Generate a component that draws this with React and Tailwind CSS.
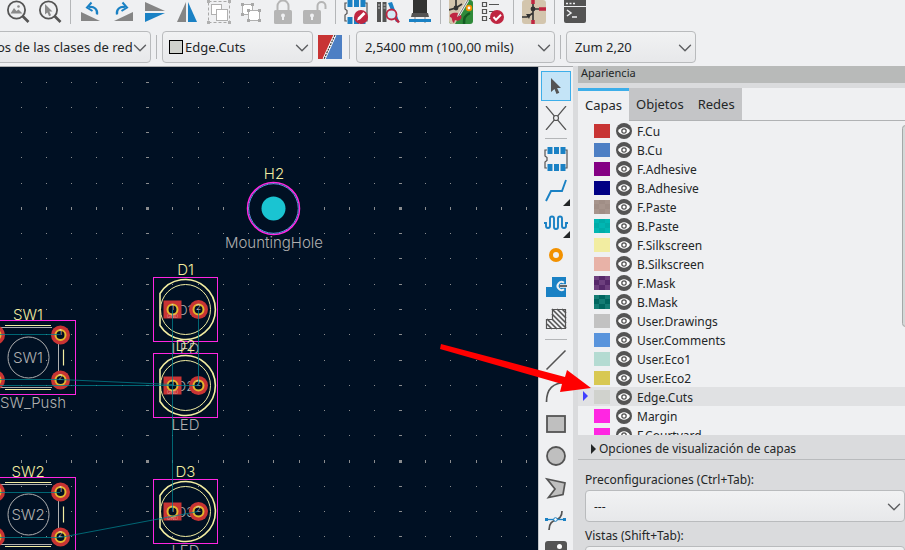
import React, { useState } from "react";
import { ChevronDown } from "lucide-react";

const layers = [
  { name: "F.Cu", color: "#c83434" },
  { name: "B.Cu", color: "#4d7fc4" },
  { name: "F.Adhesive", color: "#840084" },
  { name: "B.Adhesive", color: "#000084" },
  { name: "F.Paste", color: "#a6948c", check: "#a08e86" },
  { name: "B.Paste", color: "#00b6b2", check: "#00aca8" },
  { name: "F.Silkscreen", color: "#f2eda1" },
  { name: "B.Silkscreen", color: "#e8b2a7" },
  { name: "F.Mask", color: "#6d3f7e", check: "#56286a" },
  { name: "B.Mask", color: "#147c74", check: "#00665f" },
  { name: "User.Drawings", color: "#c2c2c2" },
  { name: "User.Comments", color: "#5994dc" },
  { name: "User.Eco1", color: "#b4dbd2" },
  { name: "User.Eco2", color: "#d8c852" },
  { name: "Edge.Cuts", color: "#d0d2cd" },
  { name: "Margin", color: "#ff26e2" },
  { name: "F.Courtyard", color: "#ff26e2" },
];

const GRAY = "#545454";
const BLUE = "#1a81c4";
const RED = "#bf2641";

function Icon({ children }) {
  return (
    <svg width="24" height="24" viewBox="0 0 24 24" fill="none" aria-hidden="true">
      {children}
    </svg>
  );
}

/* ---------- Top toolbar icons ---------- */

const Magnifier = () => (
  <>
    <circle cx="10.500" cy="10" r="8.600" stroke={GRAY} strokeWidth="1.800" />
    <path d="M16.500 16L22.500 22" stroke={GRAY} strokeWidth="2.600" />
  </>
);

const Padlock = ({ open }) => (
  <>
    <path
      d={open ? "M14.500 11V6a4 4 0 0 1 8 0v3" : "M6.500 11V6a5.500 5.500 0 0 1 11 0v5"}
      stroke="#b5b5b5"
      strokeWidth="2"
    />
    <g transform={open ? "translate(-3 0)" : undefined}>
      <rect x="3" y="10" width="18" height="14" rx="1.500" fill="#b5b5b5" />
      <circle cx="12" cy="15.500" r="2" fill="#eff0f2" />
      <path d="M11 16h2v4h-2z" fill="#eff0f2" />
    </g>
  </>
);

const Footprint = () => (
  <>
    <path d="M3 3H1v6l2 1.500v3L1 15v6h2M21 3h2v18h-2" stroke={GRAY} strokeWidth="1.200" />
    <path
      d="M3.500 0h5v7h-5zM10 0h5v7h-5zM16.500 0h5v7h-5zM3.500 17h5v7h-5zM10 17h5v7h-5zM16.500 17h5v7h-5z"
      fill={BLUE}
    />
  </>
);

const topIcons = [
  {
    label: "Zum a los objetos",
    art: (
      <>
        <Magnifier />
        <path d="M4.500 13.500L8 8l2.500 3L12.500 9.500l4 4z" fill="#8a8a8a" />
        <circle cx="12.500" cy="6.500" r="1.300" fill="#8a8a8a" />
      </>
    ),
  },
  {
    label: "Zum a la selección",
    art: (
      <>
        <Magnifier />
        <path d="M7 4l7.500 7.500h-3.200l1.800 3.800-2 .9-1.700-3.700L7 14.500z" fill="#8a8a8a" />
      </>
    ),
  },
  null,
  {
    label: "Rotar antihorario",
    art: (
      <>
        <path d="M2 12v9h19z" fill="#858585" />
        <path d="M18 14.500c1-5-3-8.500-8-7.500" stroke={BLUE} strokeWidth="2.200" />
        <path d="M12.500 2.500L8 7.500l5.500 3.500" stroke={BLUE} strokeWidth="2" />
      </>
    ),
  },
  {
    label: "Rotar horario",
    art: (
      <>
        <path d="M22 12v9H3z" fill="#858585" />
        <path d="M6 14.500c-1-5 3-8.500 8-7.500" stroke={BLUE} strokeWidth="2.200" />
        <path d="M11.500 2.500L16 7.500l-5.500 3.500" stroke={BLUE} strokeWidth="2" />
      </>
    ),
  },
  {
    label: "Reflejar verticalmente",
    art: (
      <>
        <path d="M2 2v9h20z" fill="#858585" />
        <path d="M2 22v-9h20z" fill={BLUE} />
      </>
    ),
  },
  {
    label: "Reflejar horizontalmente",
    art: (
      <>
        <path d="M2 22h9V2z" fill="#858585" />
        <path d="M22 22h-9V2z" fill={BLUE} />
      </>
    ),
  },
  {
    label: "Agrupar",
    art: (
      <>
        <rect x="1.500" y="1.500" width="21" height="21" stroke="#a8a8a8" strokeDasharray="3 2" />
        <path d="M0 0h3v3H0zM21 0h3v3h-3zM0 21h3v3H0zM21 21h3v3h-3z" fill="#b0b0b0" />
        <rect x="4.500" y="4.500" width="10" height="10" fill="#fff" stroke="#b0b0b0" />
        <rect x="9.500" y="9.500" width="11" height="11" fill="#fff" stroke="#b0b0b0" />
      </>
    ),
  },
  {
    label: "Desagrupar",
    art: (
      <>
        <rect x="3.500" y="4.500" width="10" height="10" fill="#fff" stroke="#b0b0b0" />
        <rect x="9.500" y="10.500" width="11" height="10" fill="#fff" stroke="#b0b0b0" />
        <path
          d="M2 3h3v3H2zM12 3h3v3h-3zM2 13h3v3H2zM8 9h3v3H8zM19 9h3v3h-3zM8 19h3v3H8zM19 19h3v3h-3z"
          fill="#a8a8a8"
        />
      </>
    ),
  },
  { label: "Bloquear", art: <Padlock /> },
  { label: "Desbloquear", art: <Padlock open /> },
  null,
  {
    label: "Editor de huellas",
    art: (
      <>
        <Footprint />
        <circle cx="17" cy="17" r="7" fill={RED} />
        <path d="M13 20.500l1-3 5.500-5.500 2 2-5.500 5.500z" fill="#fff" />
      </>
    ),
  },
  {
    label: "Biblioteca de huellas",
    art: (
      <>
        <path d="M1 2h4v20H1zM6.500 2h4v20h-4z" fill={GRAY} />
        <path d="M2 5h2M2 8h2M7.500 5h2M7.500 8h2" stroke="#ccc" />
        <path d="M12 3l4-1 7 19-3 1z" fill={BLUE} />
        <circle cx="15.500" cy="14.500" r="5" fill="#d3eaf5" stroke={RED} strokeWidth="1.800" />
        <path d="M19 18l4 4.500" stroke={RED} strokeWidth="2.600" />
      </>
    ),
  },
  {
    label: "Visor 3D",
    art: (
      <>
        <path d="M5 0h14v13H5z" fill="#333" />
        <path d="M4 13h16l1 4H3z" fill="#545454" />
        <path d="M7 17v6M17 17v6" stroke="#888" />
        <path d="M1 20.500h22" stroke={BLUE} strokeWidth="3" />
      </>
    ),
  },
  null,
  {
    label: "Actualizar placa",
    art: (
      <>
        <rect width="24" height="24" rx="3" fill="#2f8a3a" />
        <path d="M0 0h19L6 24H3a3 3 0 0 1-3-3z" fill="#d3c5ad" />
        <path d="M7 0v9M0 10l7-2 6-4" stroke="#333" strokeWidth="1.700" />
        <circle cx="7" cy="8" r="2.400" fill="#333" />
        <path d="M21 13c-6 3-6 5-6 11" stroke="#145c23" strokeWidth="2.500" />
        <circle cx="20" cy="8" r="2.300" fill="#fff" stroke="#f29100" strokeWidth="1.800" />
        <path d="M19 0L9 17" stroke="#eee" strokeWidth="2.500" />
        <path d="M19 0L9 17" stroke="#555" strokeWidth=".8" />
        <path d="M9 13c-5-1-9 1-8 4 3 0 1 4 4 6l1-3c4 2 8-1 6-5l-4 2z" fill={RED} />
      </>
    ),
  },
  {
    label: "Comprobador de reglas",
    art: (
      <>
        <path
          d="M1.500 2.500h4v4h-4zM1.500 9.500h4v4h-4zM1.500 16.500h4v4h-4z"
          stroke={GRAY}
          strokeWidth="1.200"
        />
        <path d="M8 4.500h10M8 11.500h5M8 18.500h3" stroke={GRAY} strokeWidth="1.200" />
        <circle cx="16" cy="17" r="7" fill={RED} />
        <path d="M12.500 17l2.500 2.800 5-5" stroke="#fff" strokeWidth="2" />
      </>
    ),
  },
  null,
  {
    label: "Editor de esquemas",
    art: (
      <>
        <rect width="24" height="24" rx="3" fill="#d3c5ad" />
        <path d="M11 0v23M11 9h13M0 17h5l6-4" stroke="#333" strokeWidth="1.600" />
        <path d="M11 0v4M17 9h7M11 20v4" stroke={RED} strokeWidth="3.500" />
        <circle cx="11" cy="9" r="2.400" fill="#333" />
        <path d="M4 14l5 0-2 5z" fill="#333" />
      </>
    ),
  },
  null,
  {
    label: "Consola",
    art: (
      <>
        <path d="M1 0h22v21a2 2 0 0 1-2 2H3a2 2 0 0 1-2-2z" fill={GRAY} />
        <path d="M1 6.500h22" stroke="#eff0f2" />
        <path d="M3 3.500h2M6.500 3.500h2M10 3.500h2" stroke="#eff0f2" strokeWidth="1.500" />
        <path d="M4 10l4 3-4 3M9 17h5" stroke="#eff0f2" strokeWidth="1.500" />
      </>
    ),
  },
];

/* ---------- Drawing tools ---------- */

const toolIcons = [
  {
    label: "Seleccionar",
    art: <path d="M7 4v14l3.500-3 2 5 2.800-1.200-2.200-4.800H17z" fill={GRAY} />,
  },
  {
    label: "Red local",
    art: (
      <>
        <path d="M2 0L22 24M22 0L2 24" stroke={GRAY} strokeWidth="1.200" />
        <circle cx="12" cy="12" r="2.500" fill="#eff0f2" stroke={GRAY} strokeWidth="1.200" />
      </>
    ),
  },
  null,
  { label: "Añadir huella", art: <Footprint /> },
  {
    label: "Enrutar pista",
    more: true,
    art: <path d="M2 22l5-10h11l4-11" stroke={BLUE} strokeWidth="1.900" />,
  },
  {
    label: "Ajustar longitud",
    more: true,
    art: (
      <path
        d="M0 12h2v3a2 2 0 0 0 4 0V7.500a2 2 0 0 1 4 0V16a2 2 0 0 0 4 0V7.500a2 2 0 0 1 4 0V15a2 2 0 0 0 4 0v-3h2"
        stroke={BLUE}
        strokeWidth="1.900"
      />
    ),
  },
  {
    label: "Añadir vía",
    art: <circle cx="12" cy="12" r="5" stroke="#f29100" strokeWidth="4" />,
  },
  {
    label: "Zona rellena",
    art: (
      <>
        <path d="M2 22V12h6V2h14v20z" fill={BLUE} />
        <path d="M20 7.800a4 4 0 1 0 0 6.400" stroke="#eff0f2" strokeWidth="2" />
        <path d="M16 11h7" stroke="#eff0f2" strokeWidth="3.600" />
        <path d="M16 11h7" stroke={GRAY} strokeWidth="1.800" />
      </>
    ),
  },
  {
    label: "Área de reglas",
    art: (
      <>
        <path
          d="M3 17l5 5M3 12l10 10M8 12l10 10M8 7l14 14M8 2l14 14M13 2l9 9M18 2l4 4"
          stroke={GRAY}
          strokeWidth="1.600"
        />
        <path d="M2.500 21.500v-9h6v-10h13v19z" stroke={GRAY} strokeWidth="1.200" />
      </>
    ),
  },
  null,
  { label: "Línea", art: <path d="M2.500 21.500l19-19" stroke={GRAY} strokeWidth="1.600" /> },
  { label: "Arco", art: <path d="M2.500 22C2.500 9 9 2.500 22 2.500" stroke={GRAY} strokeWidth="1.700" /> },
  {
    label: "Rectángulo",
    art: <rect x="3" y="4" width="18" height="16" fill="#bfbfbf" stroke={GRAY} strokeWidth="1.800" />,
  },
  {
    label: "Círculo",
    art: <circle cx="12" cy="12" r="9" fill="#bfbfbf" stroke={GRAY} strokeWidth="1.800" />,
  },
  {
    label: "Polígono",
    art: (
      <path d="M3 3l18 4-2 11.500L4.500 21.500 11 13z" fill="#bfbfbf" stroke={GRAY} strokeWidth="1.700" />
    ),
  },
  {
    label: "Curva Bézier",
    art: (
      <>
        <path d="M5 22c0-14 13-6 13-19" stroke={GRAY} strokeWidth="1.700" />
        <path d="M2 11.500h20" stroke={BLUE} strokeWidth="1.300" />
        <path d="M1 10h3v3H1zM19 10h3v3h-3z" fill={BLUE} />
        <circle cx="11.500" cy="11.500" r="1.800" fill="#fff" stroke={BLUE} />
      </>
    ),
  },
  {
    label: "Imagen",
    art: (
      <>
        <rect x="1" y="1" width="22" height="22" rx="3" fill={GRAY} />
        <circle cx="15.500" cy="6.500" r="2.500" fill="#fff" />
      </>
    ),
  },
];

/* ---------- Controls ---------- */

function Dropdown({ id, label, value, className = "", pad = "pl-2", children }) {
  return (
    <div className={`relative h-8 shrink-0 ${className}`}>
      <select
        id={id}
        aria-label={label}
        className={`h-8 w-full appearance-none rounded border border-[#b9bbbd] bg-linear-to-b from-[#f1f2f3] to-[#e7e8ea] pt-0.5 pr-3 ${pad}`}
      >
        <option>{value}</option>
      </select>
      {children}
      <ChevronDown
        size={22}
        strokeWidth={1.5}
        className="pointer-events-none absolute top-1.5 right-0 text-[#5c5e60]"
      />
    </div>
  );
}

const Divider = () => <div className="h-6 w-px shrink-0 bg-[#b4b6b8]" />;

function Toolbar() {
  return (
    <header className="shrink-0">
      <div className="flex h-[27px] items-start pl-0.5">
        {topIcons.map((icon, i) =>
          icon ? (
            <button key={icon.label} title={icon.label} className="flex h-6 w-8 shrink-0 justify-center">
              <Icon>{icon.art}</Icon>
            </button>
          ) : (
            <div key={i} className="flex w-[9px] shrink-0 justify-center">
              <Divider />
            </div>
          )
        )}
      </div>

      <div className="flex h-[39px] items-start gap-[5px] pt-1 text-[13px]">
        <Dropdown
          label="Ancho de pista"
          value="os de las clases de red"
          className="-ml-2 w-[159px]"
          pad="pl-1"
        />
        <div className="pt-1"><Divider /></div>
        <Dropdown label="Capa activa" value="Edge.Cuts" className="w-[151px]" pad="pl-[22px]">
          <span className="absolute top-[9px] left-[7px] h-3.5 w-3.5 border border-black bg-[#d0d2cd]" />
        </Dropdown>
        <button title="Par de capas" className="mt-1 shrink-0">
          <Icon>
            <path d="M0 0h16L5 24H0z" fill="#c83434" />
            <path d="M24 0h-6L7 24h17z" fill="#4d7fc4" />
            <path d="M17 0L6 24" stroke="#fff" strokeWidth="3" />
            <path d="M17 0L6 24" stroke="#333" strokeWidth="1.200" strokeDasharray="2 1" />
          </Icon>
        </button>
        <div className="pt-1 pr-px pl-0.5"><Divider /></div>
        <Dropdown label="Rejilla" value="2,5400 mm (100,00 mils)" className="w-[199px]" />
        <div className="pt-1"><Divider /></div>
        <Dropdown label="Zum" value="Zum 2,20" className="w-[130px]" />
      </div>
    </header>
  );
}

function ToolColumn() {
  return (
    <nav className="flex w-[35px] shrink-0 flex-col items-center border-l border-[#c4c6c8] pt-[3px]">
      {toolIcons.map((tool, i) =>
        tool ? (
          <div key={tool.label} className="h-8 shrink-0 py-px">
            <button
              title={tool.label}
              className={`relative flex h-[30px] w-[30px] items-center justify-center border ${
                i === 0 ? "border-[#3daee9] bg-[#c4e4f7]" : "border-transparent"
              }`}
            >
              <Icon>{tool.art}</Icon>
              {tool.more && (
                <svg width="7" height="7" className="absolute right-0 -bottom-px">
                  <path d="M7 0v7H0z" fill="#232627" />
                </svg>
              )}
            </button>
          </div>
        ) : (
          <div key={i} className="flex h-[9px] shrink-0 items-center">
            <div className="h-px w-[22px] bg-[#b4b6b8]" />
          </div>
        )
      )}
    </nav>
  );
}

/* ---------- Board ---------- */

const STEP = 25.27;
const gridIndexes = Array.from({ length: 24 }, (_, i) => i - 6);

function Grid() {
  return (
    <g fill="#8a8c8e">
      {gridIndexes.map((row) =>
        gridIndexes.map((col) => {
          const w = col % 10 === 0 ? 3 : 1;
          const h = (row - 4) % 10 === 0 ? 3 : 1;
          const x = Math.round(147.5 + col * STEP - w / 2);
          const y = Math.round(40.3 + row * STEP - h / 2);
          return <rect key={`${row}:${col}`} x={x} y={y} width={w} height={h} />;
        })
      )}
    </g>
  );
}

function Label({ x, y, color = "#f2eda1", size = 15, children }) {
  return (
    <text x={x} y={y} fill={color} fontSize={size} textAnchor="middle">
      {children}
    </text>
  );
}

function Pad({ x, y, n, square }) {
  return (
    <g>
      {square ? (
        <rect x={x - 9} y={y - 9} width="18" height="18" fill="#c83434" />
      ) : (
        <circle cx={x} cy={y} r="9.500" fill="#c83434" />
      )}
      <circle cx={x} cy={y} r="5" fill="#001023" stroke="#e3b72e" strokeWidth="2" />
      <text x={x} y={y} fill="#e4d8d8" fontSize="8" textAnchor="middle">
        {n}
      </text>
    </g>
  );
}

function Led({ y, name }) {
  return (
    <g>
      <Label x={185.5} y={y - 35}>{name}</Label>
      <Label x={185.5} y={y + 44} color="#afafaf">LED</Label>
      <g fill="none" stroke="#f2eda1">
        <path d={`M160 ${y - 16}A30 30 0 1 1 160 ${y + 16}z`} strokeWidth="1.600" />
        <circle cx="185.500" cy={y} r="25" />
      </g>
      <Label x={185.5} y={y + 5} color="#afafaf" size={13}>{name}</Label>
      <Pad x={172.5} y={y} n="1" square />
      <Pad x={198.5} y={y} n="2" />
      <text x="172.500" y={y + 8} fill="#e4b0b0" fontSize="5" textAnchor="middle">GND</text>
      <rect x="153.500" y={y - 32} width="64" height="64" fill="none" stroke="#ff26e2" />
    </g>
  );
}

function PushButton({ y, name }) {
  return (
    <g>
      <Label x={28} y={y - 38}>{name}</Label>
      <Label x={33} y={y + 50} color="#afafaf">SW_Push</Label>
      <g fill="none" stroke="#afafaf">
        <circle cx="28.500" cy={y} r="20.500" />
        <path d={`M0 ${y - 30}h52M0 ${y + 30}h52M58.500 ${y - 16}v32`} />
      </g>
      <path
        d={`M5 ${y - 32}h46M5 ${y + 32}h46M63.500 ${y - 8}v16`}
        stroke="#f2eda1"
        strokeWidth="1.200"
      />
      <Label x={28} y={y + 5} color="#afafaf">{name}</Label>
      <Pad x={60.5} y={y - 22.5} n="1" />
      <Pad x={60.5} y={y + 22.5} n="2" />
      <Pad x={-4.5} y={y - 22.5} n="1" />
      <Pad x={-4.5} y={y + 22.5} n="2" />
      <rect x="-20.500" y={y - 37} width="96" height="74" fill="none" stroke="#ff26e2" />
    </g>
  );
}

function Board() {
  return (
    <main className="min-w-0 flex-1 overflow-hidden bg-[#001023]">
      <svg
        width="538"
        height="483"
        fontFamily="Inter, 'Liberation Sans', sans-serif"
        fontWeight="300"
        role="img"
        aria-label="Placa"
      >
        <Grid />
        {/* Mounting hole */}
        <circle cx="273.500" cy="141.500" r="26" fill="none" stroke="#ff26e2" strokeWidth="1.500" />
        <circle cx="273.500" cy="141.500" r="24.800" fill="none" stroke="#5994dc" />
        <circle cx="273.500" cy="141.500" r="12" fill="#1ac4d2" />
        <Label x={274} y={112}>H2</Label>
        <Label x={274} y={181} color="#afafaf">MountingHole</Label>

        <PushButton y={290.5} name="SW1" />
        <PushButton y={447.5} name="SW2" />
        <Led y={242.5} name="D1" />
        <Led y={318.5} name="D2" />
        <Led y={444.5} name="D3" />

        {/* Ratsnest */}
        <path
          d="M0 267.500h60M0 312.500h60l112 5M0 318.500h198M172.500 243v201M198.500 243v75.500M0 425.500h60M0 470.500h60l138-26"
          fill="none"
          stroke="#00838f"
          strokeOpacity=".75"
        />
      </svg>
    </main>
  );
}

/* ---------- Appearance panel ---------- */

function EyeIcon() {
  return (
    <svg width="16" height="16" viewBox="0 0 16 16" aria-hidden="true">
      <circle cx="8" cy="8" r="8" fill="#545454" />
      <path d="M2 8c3-5 9-5 12 0-3 5-9 5-12 0z" fill="#fff" />
      <circle cx="8" cy="8" r="2.800" fill="#545454" />
      <circle cx="8" cy="8" r="1.500" fill="#fff" />
    </svg>
  );
}

function LayerRow({ layer, active, onSelect }) {
  return (
    <li
      onClick={onSelect}
      className={`relative flex h-[19px] items-center pt-px pl-4 ${active ? "bg-[#e0e1e3]" : ""}`}
    >
      {active && (
        <svg width="5" height="10" className="absolute top-1 left-[5px]">
          <path d="M0 0l5 5-5 5z" fill="#4040ff" />
        </svg>
      )}
      <svg width="16" height="14" className="shrink-0" aria-hidden="true">
        <rect width="16" height="14" fill={layer.color} />
        {layer.check && (
          <path d="M5 0h6v4H5zM0 4h5v5H0zM11 4h5v5h-5zM5 9h6v5H5z" fill={layer.check} />
        )}
      </svg>
      <button title={`Mostrar ${layer.name}`} className="ml-1.5 shrink-0">
        <EyeIcon />
      </button>
      <span className="ml-[5px] h-[18px] leading-5">{layer.name}</span>
    </li>
  );
}

function AppearancePanel() {
  const [tab, setTab] = useState("Capas");
  const [activeLayer, setActiveLayer] = useState("Edge.Cuts");

  return (
    <aside className="flex w-[332px] shrink-0 flex-col border-l-5 border-[#dadbdd] bg-[#eff0f2] text-[12px]">
      <h2 className="h-[17px] shrink-0 bg-[#b8bab9] pl-[3px] text-[11px] leading-[14px]">Apariencia</h2>
      <div className="h-[5px] shrink-0 bg-[#dadbdd]" />

      <div role="tablist" className="flex h-[33px] shrink-0 border-b border-[#b0b2b4] text-[13px]">
        {["Capas", "Objetos", "Redes"].map((name) => (
          <button
            key={name}
            role="tab"
            aria-selected={tab === name}
            onClick={() => setTab(name)}
            className={`px-[7px] ${
              tab === name ? "-mb-px border-t-3 border-[#3daee9] bg-[#eff0f2]" : "bg-[#c4c5c7] pt-0.5"
            }`}
          >
            {name}
          </button>
        ))}
      </div>

      <ul className="relative min-h-0 flex-1 overflow-hidden">
        {layers.map((layer) => (
          <LayerRow
            key={layer.name}
            layer={layer}
            active={layer.name === activeLayer}
            onSelect={() => setActiveLayer(layer.name)}
          />
        ))}
        <li
          aria-hidden="true"
          className="absolute top-1 -right-1 h-[202px] w-[7px] rounded border border-[#a5a8a8] bg-[#d3d8d7]"
        />
      </ul>

      <div className="h-[115px] shrink-0 overflow-hidden bg-[#dadbdd]">
        <button className="flex h-[25px] w-full items-center gap-[3px] border-b border-[#b9bbbd] pt-[3px] pl-[13px]">
          <svg width="5" height="10" aria-hidden="true">
            <path d="M0 0l5 5-5 5z" fill="#232627" />
          </svg>
          Opciones de visualización de capas
        </button>
        <div className="flex flex-col pt-2.5 pl-[7px]">
          <label htmlFor="presets" className="h-5 leading-5">Preconfiguraciones (Ctrl+Tab):</label>
          <Dropdown id="presets" value="---" />
          <label htmlFor="viewports" className="mt-1 h-5 leading-5">Vistas (Shift+Tab):</label>
          <Dropdown id="viewports" value="---" />
        </div>
      </div>
    </aside>
  );
}

export default function App() {
  return (
    <div className="relative flex h-screen flex-col overflow-hidden bg-[#eff0f2] font-['Noto_Sans',sans-serif] text-[#232627]">
      <Toolbar />
      <div className="flex min-h-0 flex-1">
        <div className="flex min-w-0 flex-1 border-t border-[#a9abad]">
          <Board />
          <ToolColumn />
        </div>
        <AppearancePanel />
      </div>

      {/* Callout arrow */}
      <svg
        width="160"
        height="60"
        className="pointer-events-none absolute top-[340px] left-[436px]"
        aria-hidden="true"
      >
        <path d="M5 4l124 33 2-7 24 18-31 4 2-8L4 9z" fill="#ff0000" />
      </svg>
    </div>
  );
}
